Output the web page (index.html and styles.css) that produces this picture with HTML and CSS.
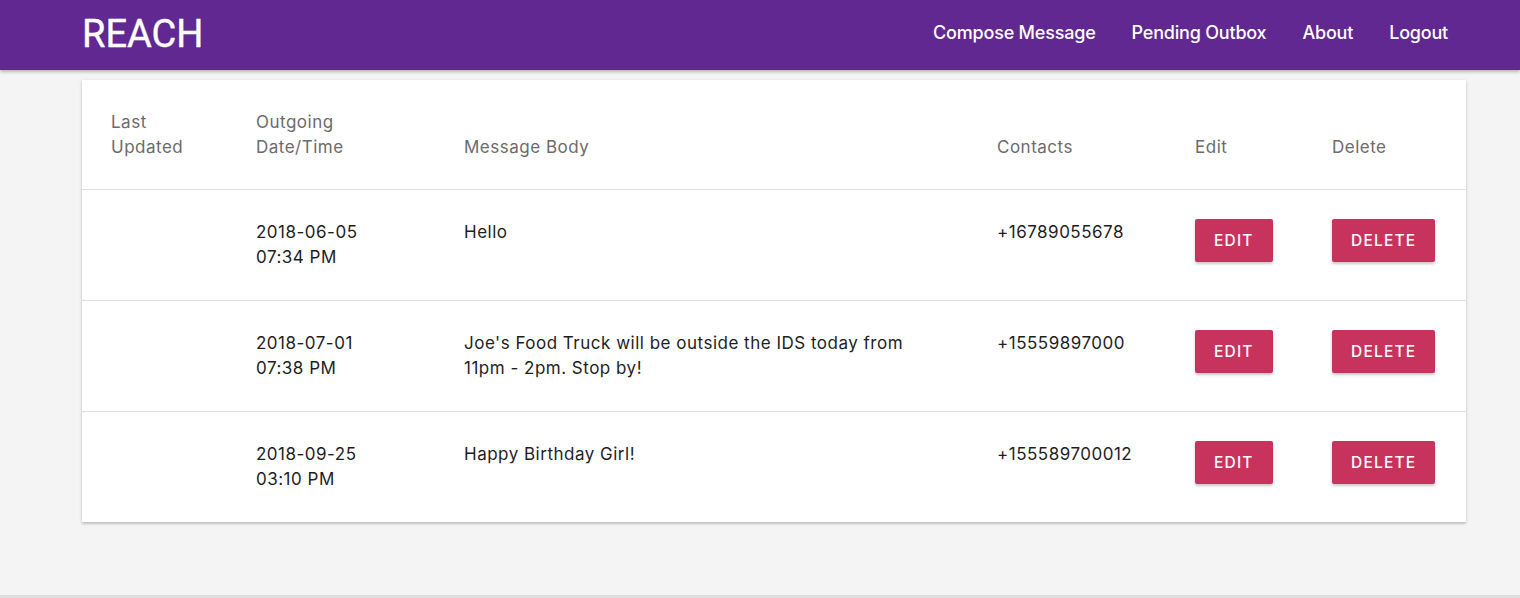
FILE: index.html
```html
<!DOCTYPE html>
<html>
<head>
<meta charset="utf-8">
<title>REACH</title>
<link rel="stylesheet" href="styles.css">
</head>
<body>
<nav class="nav">
  <a class="logo" href="#">REACH</a>
  <ul class="links">
    <li><a href="#">Compose Message</a></li>
    <li><a href="#">Pending Outbox</a></li>
    <li><a href="#">About</a></li>
    <li><a href="#">Logout</a></li>
  </ul>
</nav>
<main class="main">
  <div class="card">
    <table class="table">
      <thead>
        <tr>
          <th class="c1">Last<br>Updated</th>
          <th class="c2">Outgoing<br>Date/Time</th>
          <th class="c3">Message Body</th>
          <th class="c4">Contacts</th>
          <th class="c5">Edit</th>
          <th class="c6">Delete</th>
        </tr>
      </thead>
      <tbody>
        <tr>
          <td class="c1"></td>
          <td class="c2">2018-06-05<br>07:34 PM</td>
          <td class="c3">Hello</td>
          <td class="c4">+16789055678</td>
          <td class="c5"><button class="btn">Edit</button></td>
          <td class="c6"><button class="btn">Delete</button></td>
        </tr>
        <tr>
          <td class="c1"></td>
          <td class="c2">2018-07-01<br>07:38 PM</td>
          <td class="c3">Joe's Food Truck will be outside the IDS today from 11pm - 2pm. Stop by!</td>
          <td class="c4">+15559897000</td>
          <td class="c5"><button class="btn">Edit</button></td>
          <td class="c6"><button class="btn">Delete</button></td>
        </tr>
        <tr>
          <td class="c1"></td>
          <td class="c2">2018-09-25<br>03:10 PM</td>
          <td class="c3">Happy Birthday Girl!</td>
          <td class="c4">+155589700012</td>
          <td class="c5"><button class="btn">Edit</button></td>
          <td class="c6"><button class="btn">Delete</button></td>
        </tr>
      </tbody>
    </table>
  </div>
</main>
<footer class="footer"></footer>
</body>
</html>
```

FILE: styles.css
```css
* { box-sizing: border-box; }
html, body { margin: 0; padding: 0; }
body {
  background: #f4f4f4;
  font-family: Inter, "Liberation Sans", sans-serif;
  height: 598px;
  overflow: hidden;
  display: flex;
  flex-direction: column;
}
.nav {
  height: 70px;
  background: #612891;
  display: flex;
  align-items: center;
  justify-content: space-between;
  padding: 0 54px 0 82px;
  box-shadow: 0 2px 3px rgba(0,0,0,0.25);
  position: relative;
  z-index: 1;
}
.logo {
  color: #fff;
  text-decoration: none;
  font-family: Roboto, "Liberation Sans", sans-serif;
  font-size: 38px;
  font-weight: 400;
  -webkit-text-stroke: 0.4px #fff;
  margin-top: -3px;
}
.links {
  list-style: none;
  display: flex;
  margin: 0;
  padding: 0;
}
.links a {
  display: block;
  color: #fff;
  text-decoration: none;
  font-family: Inter, Roboto, sans-serif;
  font-weight: 500;
  font-size: 18px;
  letter-spacing: -0.2px;
  padding: 0 18px;
  margin-top: -6px;
}
.main {
  flex: 1;
  padding: 10px 54px 0 82px;
}
.card {
  background: #fff;
  box-shadow: 0 2px 2px rgba(0,0,0,0.14), 0 1px 4px rgba(0,0,0,0.12);
}
.table {
  width: 100%;
  border-collapse: collapse;
  font-size: 17px;
  letter-spacing: 0.5px;
  line-height: 25px;
}
.table th {
  font-weight: 400;
  color: #6b6b6b;
  text-align: left;
  vertical-align: bottom;
  padding: 29px 0 29px;
  height: 109px;
}
.table td {
  color: #1e1e1e;
  vertical-align: top;
  padding: 30px 0 30px;
  height: 110px;
}
.table tr { border-bottom: 1px solid #dedede; }
.table tbody tr:last-child { border-bottom: none; }
.c1 { width: 174px; padding-left: 29px !important; }
.c2 { width: 208px; }
.c3 { width: 533px; padding-right: 70px !important; }
.c4 { width: 198px; }
.c5 { width: 137px; }
.btn {
  background: #c7335d;
  color: #fff;
  border: none;
  border-radius: 2px;
  height: 43px;
  padding: 0 19px;
  font-family: Inter, sans-serif;
  font-size: 15.5px;
  font-weight: 500;
  letter-spacing: 1.2px;
  text-transform: uppercase;
  box-shadow: 0 2px 3px rgba(0,0,0,0.22);
  margin-top: -1px;
}
.footer {
  height: 3px;
  background: #dcdcdc;
}
```
